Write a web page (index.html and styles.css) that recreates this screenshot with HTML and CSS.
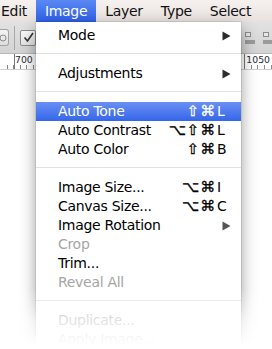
FILE: index.html
```html
<!DOCTYPE html>
<html lang="en">
<head>
    <meta charset="UTF-8">
    <meta name="viewport" content="width=device-width, initial-scale=1.0">
    <title>Image Menu</title>
    <link rel="stylesheet" href="styles.css">
</head>
<body>
    <div class="screen">
        <div class="menubar">
            <span class="bar-item first">Edit</span>
            <span class="bar-item active">Image</span>
            <span class="bar-item">Layer</span>
            <span class="bar-item">Type</span>
            <span class="bar-item">Select</span>
        </div>

        <div class="toolbar">
            <span class="tool-btn">
                <svg width="8" height="8" viewBox="0 0 8 8"><circle cx="3" cy="4" r="3" fill="none" stroke="#8a8a8a" stroke-width="1"/></svg>
            </span>
            <span class="tool-sep"></span>
            <span class="checkbox">
                <svg width="13" height="13" viewBox="0 0 13 13"><path d="M2.5 6.5 L5.5 10 L11 2" fill="none" stroke="#333" stroke-width="1.6"/></svg>
            </span>
            <span class="spacer"></span>
            <span class="align-icon"><i class="box"></i><i class="bar"></i></span>
            <span class="align-icon"><i class="box"></i><i class="bar"></i></span>
        </div>

        <div class="ruler">
            <span class="mark mark-left">700</span>
            <span class="spacer"></span>
            <span class="mark">1050</span>
        </div>

        <div class="menu">
            <div class="item">Mode <svg class="arrow" width="9" height="10" viewBox="0 0 9 10"><path d="M0.5 0.5 L8.5 5 L0.5 9.5 Z" fill="#2b2b2b"/></svg></div>
            <div class="sep"></div>
            <div class="item">Adjustments <svg class="arrow" width="9" height="10" viewBox="0 0 9 10"><path d="M0.5 0.5 L8.5 5 L0.5 9.5 Z" fill="#2b2b2b"/></svg></div>
            <div class="sep"></div>
            <div class="item selected">Auto Tone <span class="keys"><span class="mods">⇧⌘</span><span class="key">L</span></span></div>
            <div class="item">Auto Contrast <span class="keys"><span class="mods">⌥⇧⌘</span><span class="key">L</span></span></div>
            <div class="item">Auto Color <span class="keys"><span class="mods">⇧⌘</span><span class="key">B</span></span></div>
            <div class="sep"></div>
            <div class="item">Image Size... <span class="keys"><span class="mods">⌥⌘</span><span class="key">I</span></span></div>
            <div class="item">Canvas Size... <span class="keys"><span class="mods">⌥⌘</span><span class="key">C</span></span></div>
            <div class="item">Image Rotation <svg class="arrow" width="9" height="10" viewBox="0 0 9 10"><path d="M0.5 0.5 L8.5 5 L0.5 9.5 Z" fill="#555"/></svg></div>
            <div class="item disabled">Crop</div>
            <div class="item">Trim...</div>
            <div class="item disabled">Reveal All</div>
            <div class="sep"></div>
            <div class="item disabled">Duplicate...</div>
            <div class="item disabled">Apply Image...</div>
        </div>

        <div class="fade"></div>
    </div>
</body>
</html>
```

FILE: styles.css
```css
body {
    margin: 0;
    background-color: #fff;
    font-family: "DejaVu Sans", "Noto Sans", sans-serif;
}
.screen {
    position: relative;
    width: 272px;
    height: 349px;
    overflow: hidden;
    background-color: #fff;
}
.menubar {
    display: flex;
    height: 22px;
    background: linear-gradient(#f6f1ef, #e8e1de);
    font-size: 14px;
    letter-spacing: -0.3px;
    line-height: 22px;
    color: #111;
}
.bar-item {
    padding: 0 9px;
    white-space: nowrap;
}
.bar-item.first {
    margin-left: -8px;
}
.bar-item.active {
    background: linear-gradient(#5a88f3, #2e60e8);
    color: #fff;
}
.toolbar {
    display: flex;
    align-items: center;
    height: 31px;
    background: linear-gradient(#e2e2e2, #d3d3d3);
    border-bottom: 1px solid #b8b8b8;
}
.tool-btn {
    display: flex;
    align-items: center;
    justify-content: flex-end;
    width: 9px;
    height: 15px;
    margin-left: -1px;
    border: 1px solid #a2a2a2;
    border-left: none;
    border-radius: 0 3px 3px 0;
    background: linear-gradient(#f4f4f4, #dedede);
}
.tool-sep {
    width: 1px;
    height: 24px;
    margin-left: 5px;
    background-color: #a8a8a8;
}
.checkbox {
    display: flex;
    align-items: center;
    justify-content: center;
    width: 14px;
    height: 14px;
    margin-left: 5px;
    border: 1px solid #8c8c8c;
    border-radius: 2px;
    background: linear-gradient(#fafafa, #e4e4e4);
}
.spacer {
    flex: 1;
}
.align-icon {
    display: flex;
    flex-direction: column;
    align-items: flex-start;
    gap: 3px;
    width: 11px;
    margin-right: 7px;
}
.align-icon:last-child {
    margin-right: -2px;
}
.align-icon .box {
    width: 4px;
    height: 3px;
    border: 1px solid #8d8d8d;
    background-color: #e8e8e8;
}
.align-icon .bar {
    width: 10px;
    height: 4px;
    background-color: #9b9b9b;
}
.ruler {
    display: flex;
    height: 15px;
    background-color: #fff;
    background-image:
        linear-gradient(90deg, transparent 14px, #777 14px, #777 15px, transparent 15px, transparent 244px, #777 244px, #777 245px, transparent 245px),
        repeating-linear-gradient(90deg, transparent 0, transparent 5.6px, #888 5.6px, #888 6.6px);
    background-size: 100% 100%, 100% 4px;
    background-position: 0 0, 1px 11px;
    background-repeat: no-repeat;
    border-bottom: 1px solid #d0d0d0;
    font-size: 9.3px;
    line-height: 12px;
    color: #2a2a3a;
}
.mark {
    padding-left: 2px;
    margin-right: 2px;
}
.mark-left {
    margin-left: 13px;
}
.menu {
    position: absolute;
    top: 22px;
    left: 36px;
    width: 205px;
    padding-top: 4px;
    background-color: #fff;
    box-shadow: 0 0 0 1px rgba(0, 0, 0, 0.08), 0 6px 15px rgba(0, 0, 0, 0.4);
    font-size: 14px;
    letter-spacing: -0.3px;
    color: #000;
}
.item {
    display: flex;
    align-items: center;
    justify-content: space-between;
    height: 19px;
    padding: 0 12px 0 22px;
    line-height: 19px;
    white-space: nowrap;
}
.item .arrow {
    margin-right: -2px;
}
.item.selected {
    background: linear-gradient(#6a90f4, #3566ea);
    color: #fff;
}
.item.disabled {
    color: #a5a5a5;
}
.keys {
    display: flex;
}
.mods {
    font-size: 15px;
    letter-spacing: 0.8px;
    -webkit-text-stroke: 0.3px currentColor;
}
.key {
    width: 12px;
    margin-left: 1px;
    letter-spacing: 0;
}
.sep {
    height: 19px;
    background: linear-gradient(transparent 8px, #e2e2e2 8px, #e2e2e2 9px, transparent 9px);
}
.fade {
    position: absolute;
    left: 0;
    right: 0;
    top: 288px;
    bottom: 0;
    background: linear-gradient(rgba(255, 255, 255, 0), rgba(255, 255, 255, 0.7) 55%, #fff 95%);
}
```
